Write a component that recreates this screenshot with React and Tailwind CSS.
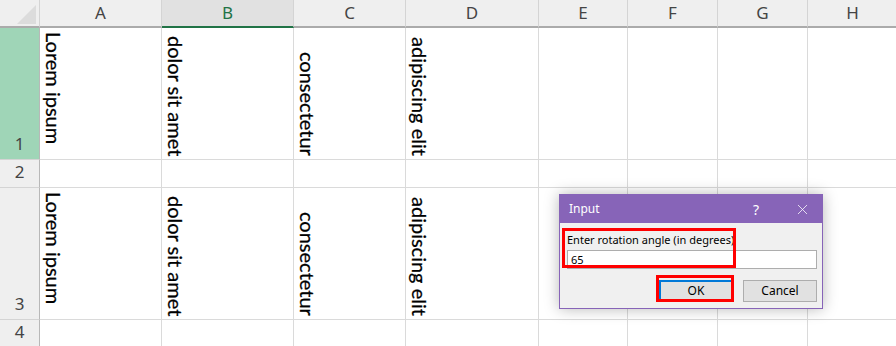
import { X } from 'lucide-react';
import clsx from 'clsx';

const columns = [
    { id: 'A', w: 'w-[122px]' },
    { id: 'B', w: 'w-[132px]', selected: true },
    { id: 'C', w: 'w-[112px]' },
    { id: 'D', w: 'w-[133px]' },
    { id: 'E', w: 'w-[89px]' },
    { id: 'F', w: 'w-[90px]' },
    { id: 'G', w: 'w-[90px]' },
    { id: 'H', w: 'w-[90px]' },
];

const texts = ['Lorem ipsum', 'dolor sit amet', 'consectetur', 'adipiscing elit'];

const rows = [
    { n: 1, h: 'h-[132px]', filled: true, selected: true },
    { n: 2, h: 'h-[28px]' },
    { n: 3, h: 'h-[132px]', filled: true },
    { n: 4, h: 'h-[28px]' },
];

const headerFont = { fontFamily: '"Noto Sans", "Open Sans", sans-serif' };
const cellFont = { fontFamily: 'Lato, "Open Sans", sans-serif' };

const Cell = ({ col, idx, row }) => {
    const text = row.filled ? texts[idx] : null;
    return (
        <div className={clsx(
            "shrink-0 border-r border-b border-[#dadada] bg-white flex flex-col pl-[4px]",
            col.w,
            idx === 0 ? "justify-start pt-[4px]" : "justify-end pb-[3px]"
        )}>
            {text && (
                <span className="self-start [writing-mode:vertical-rl] leading-none text-[20px] text-black whitespace-nowrap [-webkit-text-stroke:0.25px_black]" style={cellFont}>
                    {text}
                </span>
            )}
        </div>
    );
};

const Dialog = () => (
    <div className="absolute left-[559px] top-[194px] w-[264px] h-[115px] flex flex-col border border-[#8764b8] bg-[#f0f0f0] shadow-[0_0_14px_rgba(0,0,0,0.28)]" style={headerFont}>
        <div className="h-[28px] shrink-0 bg-[#8764b8] flex items-center pl-[9px] pr-[11px] text-white text-[12px]">
            <span>Input</span>
            <span className="ml-auto mr-[35px] text-[14px]">?</span>
            <X className="w-[17px] h-[17px]" strokeWidth={1.1} />
        </div>
        <div className="relative flex-1 px-[7px] pt-[9px]">
            <div className="text-[11px] leading-[15px] text-black">Enter rotation angle (in degrees)</div>
            <div className="mt-[3px] h-[19px] ml-0 mr-[-2px] border border-[#adadad] bg-white text-[11px] leading-[17px] pl-[3px] text-black">65</div>
            <div className="flex justify-end gap-[10px] mt-[11px] mr-[-2px]">
                <div className="w-[74px] h-[22px] border-2 border-[#0078d7] bg-[#e1e1e1] flex items-center justify-center text-[12px] text-black">OK</div>
                <div className="w-[74px] h-[22px] border border-[#adadad] bg-[#e1e1e1] flex items-center justify-center text-[12px] text-black">Cancel</div>
            </div>
            {/* annotation boxes */}
            <div className="absolute left-[2px] top-[5px] w-[174px] h-[40px] border-[3px] border-[#ff0000]"></div>
            <div className="absolute left-[96px] top-[52px] w-[78px] h-[27px] border-[3px] border-[#ff0000]"></div>
        </div>
    </div>
);

const App = () => {
    return (
        <div className="relative w-[896px] h-[346px] overflow-hidden bg-white select-none">
            {/* column headers */}
            <div className="flex h-[28px]" style={headerFont}>
                <div className="relative shrink-0 w-[40px] h-full bg-[#efefef] border-r border-[#d4d4d4] border-b-2 border-b-[#ababab]">
                    <div className="absolute left-[17px] top-[5px] w-[19px] h-[19px] bg-[#dcdcdc] [clip-path:polygon(100%_0,100%_100%,0_100%)]"></div>
                </div>
                {columns.map(col => (
                    <div key={col.id} className={clsx(
                        "shrink-0 h-full border-r border-[#d4d4d4] border-b-2 flex items-center justify-center text-[17px]",
                        col.w,
                        col.selected ? "bg-[#e1e1e1] border-b-[#217346] text-[#217346]" : "bg-[#efefef] border-b-[#ababab] text-[#444]"
                    )}>
                        {col.id}
                    </div>
                ))}
            </div>

            {rows.map(row => (
                <div key={row.n} className={clsx("flex", row.h)}>
                    <div className={clsx(
                        "shrink-0 w-[40px] border-r border-r-[#b8b8b8] border-b border-b-[#d4d4d4] flex items-end justify-center pb-[3px] text-[17px] text-[#444]",
                        row.selected ? "bg-[#9fd5b7]" : "bg-[#efefef]"
                    )} style={headerFont}>
                        {row.n}
                    </div>
                    {columns.map((col, idx) => (
                        <Cell key={col.id} col={col} idx={idx} row={row} />
                    ))}
                </div>
            ))}

            <Dialog />
        </div>
    );
};

export default App;
